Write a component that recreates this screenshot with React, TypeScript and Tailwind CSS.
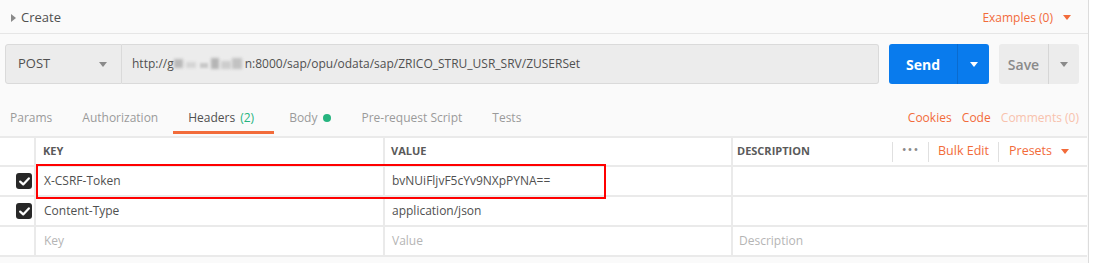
import React from "react";

function CaretDown({ className = "" }: { className?: string }) {
  return (
    <svg width="8" height="5" viewBox="0 0 8 5" className={className}>
      <path d="M0 0 L8 0 L4 5 Z" fill="currentColor" />
    </svg>
  );
}

function Check() {
  return (
    <div className="w-[16px] h-[16px] rounded-[3px] bg-[#282828] flex items-center justify-center">
      <svg width="11" height="9" viewBox="0 0 11 9">
        <path d="M1.2 4.6 L4.2 7.4 L9.8 1.4" stroke="#fff" strokeWidth="2.2" fill="none" strokeLinecap="round" strokeLinejoin="round" />
      </svg>
    </div>
  );
}

function Tab({ label, active, extra, className = "px-[15px]" }: { label: string; active?: boolean; extra?: React.ReactNode; className?: string }) {
  return (
    <div
      className={
        "h-[32px] pt-[3px] flex items-center border-b-[3px] " +
        className +
        " " +
        (active ? "border-[#f26b3a] text-[#505050]" : "border-transparent text-[#9a9a9a]")
      }
    >
      <span>{label}</span>
      {extra}
    </div>
  );
}

export default function App() {
  return (
    <div
      className="w-[1093px] h-[263px] bg-white flex overflow-hidden"
      style={{ fontFamily: '"Open Sans", "Noto Sans", sans-serif' }}
    >
      <div className="w-[1089px] h-full bg-[#fafafa] border-r border-[#dcdcdc] flex flex-col relative">
        {/* top bar */}
        <div className="h-[34px] border-b border-[#e6e6e6] flex items-center pl-[11px] pr-[17px] pt-[2px]">
          <svg width="5" height="8" viewBox="0 0 5 8" className="text-[#8a8a8a]">
            <path d="M0 0 L5 4 L0 8 Z" fill="currentColor" />
          </svg>
          <span className="ml-[5px] text-[13px] text-[#505050]">Create</span>
          <div className="flex-1" />
          <span className="text-[12px] text-[#f26b3a]">Examples (0)</span>
          <CaretDown className="ml-[10px] text-[#f26b3a]" />
        </div>

        {/* URL row */}
        <div className="mt-[10px] h-[40px] flex pl-[5px]">
          <div className="w-[117px] h-full bg-[#ececec] border border-[#dadada] rounded-l-[3px] flex items-center pl-[12px] pr-[14px]">
            <span className="text-[13px] text-[#505050]">POST</span>
            <div className="flex-1" />
            <CaretDown className="text-[#8a8a8a]" />
          </div>
          <div className="w-[757px] h-full bg-[#ececec] border border-l-0 border-[#dadada] rounded-r-[3px] flex items-center pl-[10px] text-[12px] text-[#505050] whitespace-nowrap">
            <span>http://g</span>
            <span className="inline-flex items-center w-[71px] h-[14px] relative">
              <span className="absolute left-[0px] top-[2px] w-[9px] h-[9px] bg-[#b9b9b9] blur-[1.5px]" />
              <span className="absolute left-[12px] top-[5px] w-[10px] h-[6px] bg-[#d4d4d4] blur-[1.5px]" />
              <span className="absolute left-[26px] top-[6px] w-[8px] h-[5px] bg-[#c8c8c8] blur-[1px]" />
              <span className="absolute left-[37px] top-[1px] w-[8px] h-[11px] bg-[#b5b5b5] blur-[1.5px]" />
              <span className="absolute left-[47px] top-[4px] w-[10px] h-[8px] bg-[#cdcdcd] blur-[1.5px]" />
              <span className="absolute left-[58px] top-[1px] w-[10px] h-[11px] bg-[#c2c2c2] blur-[1.5px]" />
            </span>
            <span>n:8000/sap/opu/odata/sap/ZRICO_STRU_USR_SRV/ZUSERSet</span>
          </div>
          <div className="ml-[10px] w-[100px] h-full bg-[#097bed] rounded-[3px] flex">
            <div className="w-[69px] border-r border-[#0a6bcf] flex items-center justify-center text-white text-[14px] font-bold">
              Send
            </div>
            <div className="flex-1 flex items-center justify-center text-white">
              <CaretDown />
            </div>
          </div>
          <div className="ml-[10px] w-[80px] h-full bg-[#ececec] rounded-[3px] flex">
            <div className="w-[50px] border-r border-[#d6d6d6] flex items-center justify-center text-[#8a8a8a] text-[14px] font-semibold">
              Save
            </div>
            <div className="flex-1 flex items-center justify-center text-[#8a8a8a]">
              <CaretDown />
            </div>
          </div>
        </div>

        {/* Tabs */}
        <div className="mt-[18px] h-[32px] flex text-[12px] pr-[9px]">
          <div className="flex -ml-[5px]">
            <Tab label="Params" />
            <Tab label="Authorization" />
            <Tab label="Headers" active className="pl-[15px] pr-[20px]" extra={<span className="ml-[5px] text-[#26b47f]">(2)</span>} />
            <Tab label="Body" extra={<span className="ml-[6px] w-[8px] h-[8px] rounded-full bg-[#26b47f]" />} />
            <Tab label="Pre-request Script" />
            <Tab label="Tests" />
          </div>
          <div className="flex-1" />
          <div className="flex items-center pt-[3px] pb-[3px]">
            <span className="w-[54px] text-[#f26b3a]">Cookies</span>
            <span className="w-[39px] text-[#f26b3a]">Code</span>
            <span className="text-[#f8c2ad]">Comments (0)</span>
          </div>
        </div>

        {/* Table */}
        <div className="mt-[2px] bg-white border-t-2 border-[#eaeaea] text-[12px] mr-[1px]">
          {/* header row */}
          <div className="h-[29px] flex border-b-2 border-[#eaeaea]">
            <div className="w-[36px] border-r-2 border-[#eaeaea]" />
            <div className="w-[349px] border-r-2 border-[#eaeaea] flex items-center pl-[7px] text-[11px] font-bold text-[#5a5a5a]">KEY</div>
            <div className="w-[348px] border-r-2 border-[#eaeaea] flex items-center pl-[6px] text-[11px] font-bold text-[#5a5a5a]">VALUE</div>
            <div className="flex-1 flex items-center pl-[4px]">
              <span className="text-[11px] font-bold text-[#5a5a5a]">DESCRIPTION</span>
              <div className="flex-1" />
              <div className="h-[20px] border-l border-[#e0e0e0] w-[36px] flex items-center justify-center text-[#8a8a8a] text-[13px] leading-none tracking-[1px] pb-[4px]">•••</div>
              <div className="h-[20px] border-l border-[#e0e0e0] w-[70px] flex items-center justify-center text-[#f26b3a] text-[12.5px]">Bulk Edit</div>
              <div className="h-[20px] border-l border-[#e0e0e0] w-[89px] flex items-center pl-[10px] text-[#f26b3a] text-[12.5px]">
                Presets
                <CaretDown className="ml-[9px]" />
              </div>
            </div>
          </div>
          {[
            { k: "X-CSRF-Token", v: "bvNUiFljvF5cYv9NXpPYNA==", d: "", c: true },
            { k: "Content-Type", v: "application/json", d: "", c: true },
            { k: "Key", v: "Value", d: "Description", c: false },
          ].map((r, i) => (
            <div key={i} className="h-[30px] flex border-b-2 border-[#eaeaea]">
              <div className="w-[36px] border-r-2 border-[#eaeaea] flex items-center pl-[16px]">
                {r.c && <Check />}
              </div>
              <div className={"w-[349px] border-r-2 border-[#eaeaea] flex items-center pl-[8px] " + (r.c ? "text-[#505050]" : "text-[#b5b5b5]")}>{r.k}</div>
              <div className={"w-[348px] border-r-2 border-[#eaeaea] flex items-center pl-[7px] " + (r.c ? "text-[#505050]" : "text-[#b5b5b5]")}>{r.v}</div>
              <div className="flex-1 flex items-center pl-[6px] text-[#b5b5b5]">{r.d}</div>
            </div>
          ))}
          {/* annotation */}
          <div className="absolute left-[36px] top-[164px] w-[570px] h-[35px] border-2 border-[#ff0000] pointer-events-none" />
        </div>
      </div>
    </div>
  );
}
